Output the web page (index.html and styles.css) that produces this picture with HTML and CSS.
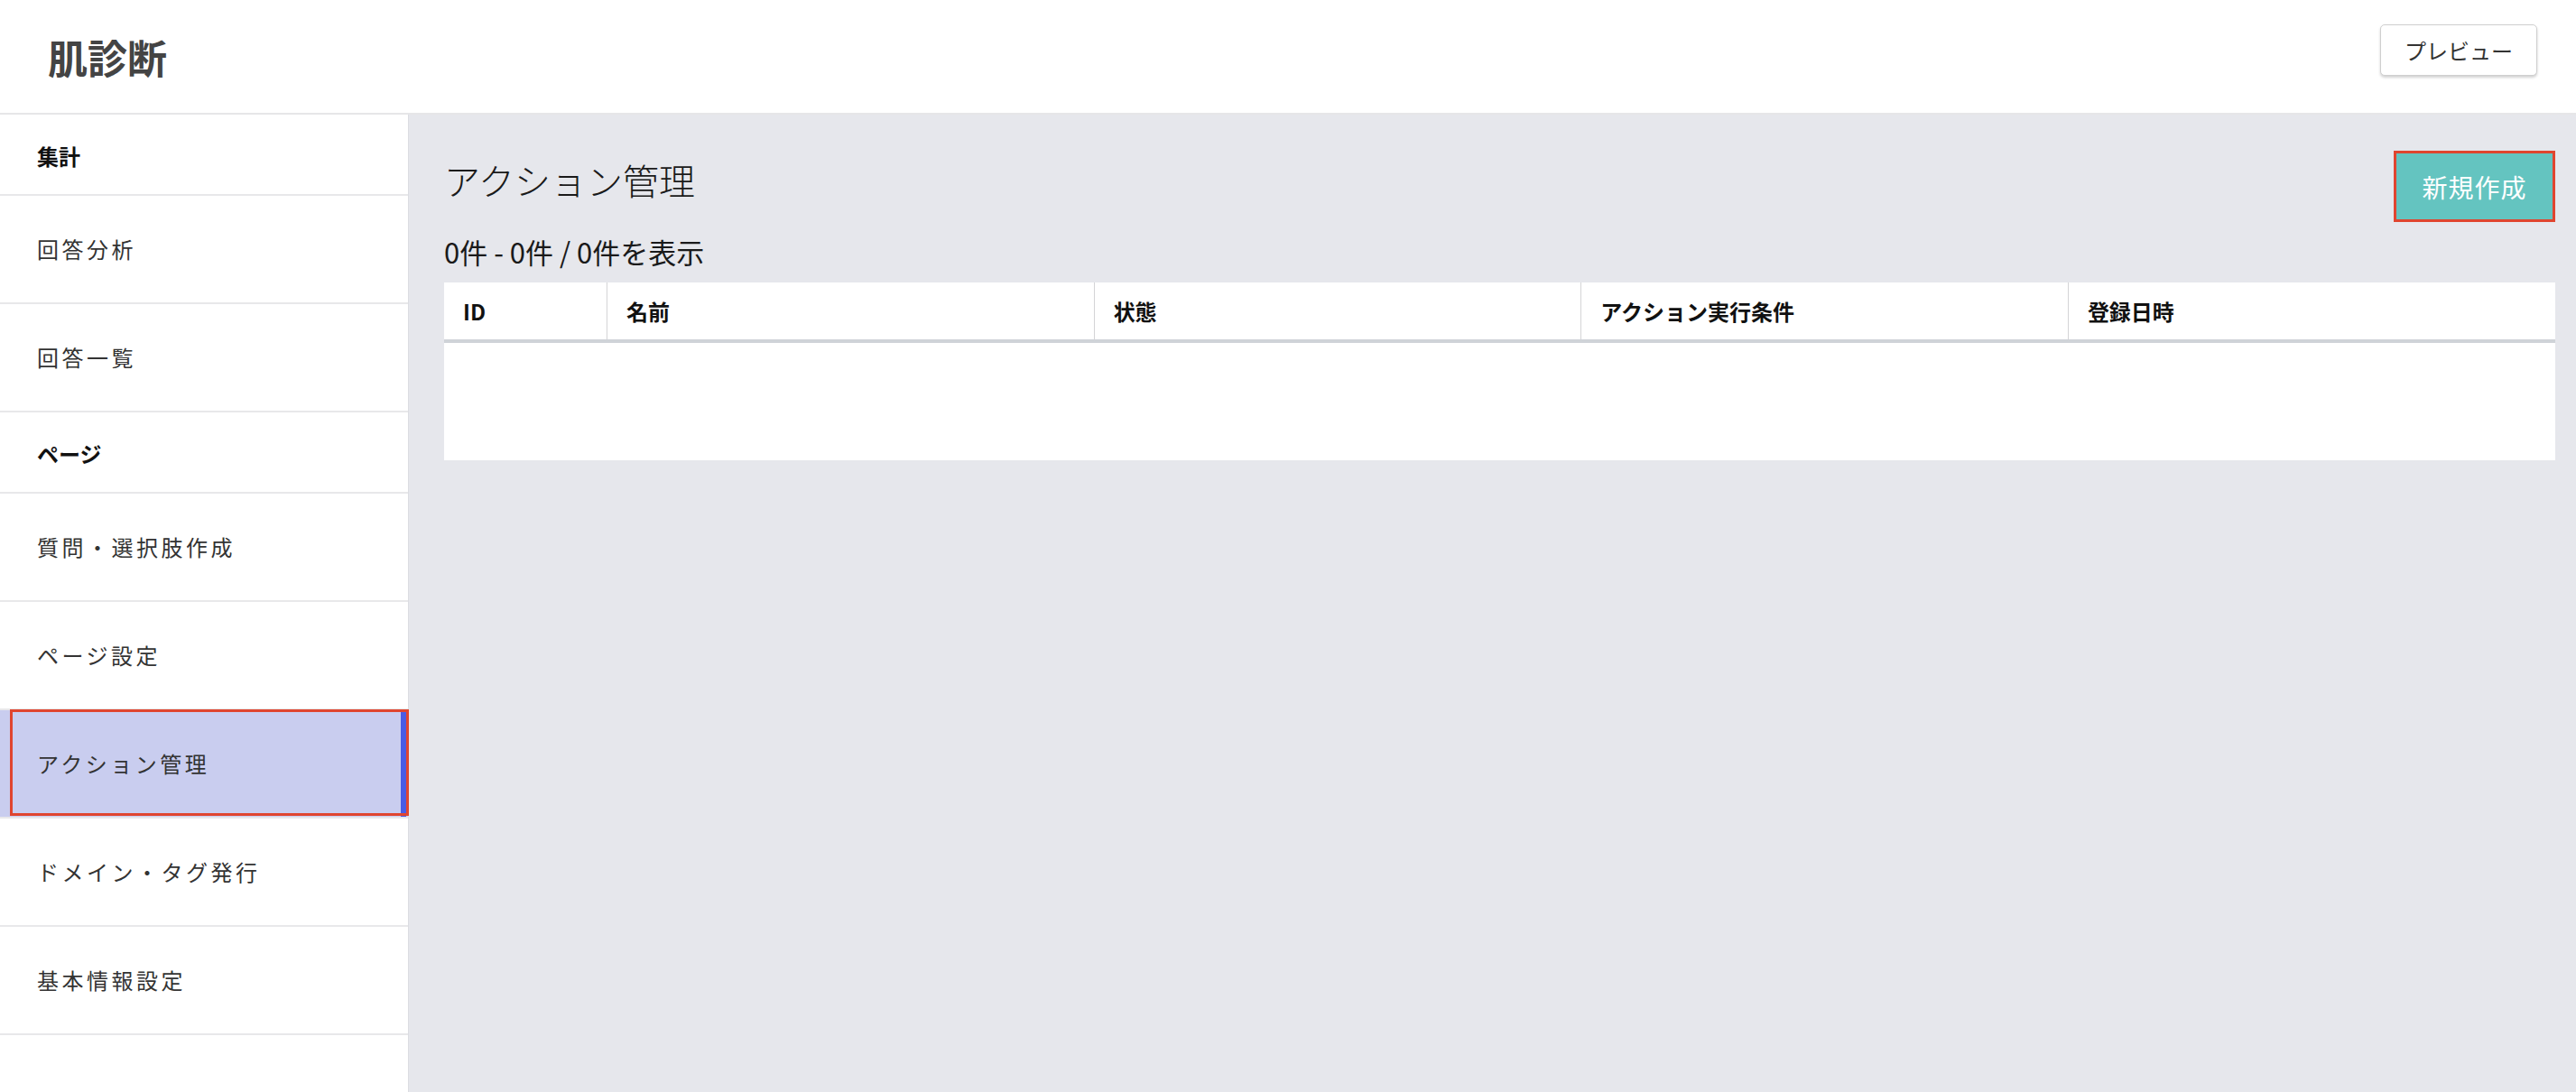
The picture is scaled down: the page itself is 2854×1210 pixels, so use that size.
FILE: index.html
```html
<!DOCTYPE html>
<html lang="ja">
<head>
    <meta charset="UTF-8">
    <title>肌診断 - アクション管理</title>
    <link rel="stylesheet" href="styles.css">
</head>
<body>
    <header class="header">
        <h1 class="logo">肌診断</h1>
        <button class="preview-btn">プレビュー</button>
    </header>

    <div class="layout">
        <nav class="sidebar">
            <div class="nav-group">集計</div>
            <a class="nav-item" href="#">回答分析</a>
            <a class="nav-item" href="#">回答一覧</a>
            <div class="nav-group">ページ</div>
            <a class="nav-item" href="#">質問・選択肢作成</a>
            <a class="nav-item" href="#">ページ設定</a>
            <a class="nav-item active" href="#">アクション管理</a>
            <a class="nav-item" href="#">ドメイン・タグ発行</a>
            <a class="nav-item" href="#">基本情報設定</a>
        </nav>

        <main class="main">
            <div class="toolbar">
                <h2 class="page-title">アクション管理</h2>
                <button class="new-btn">新規作成</button>
            </div>
            <p class="count">0件 - 0件 / 0件を表示</p>

            <table class="list">
                <thead>
                    <tr>
                        <th class="col-id">ID</th>
                        <th>名前</th>
                        <th>状態</th>
                        <th>アクション実行条件</th>
                        <th>登録日時</th>
                    </tr>
                </thead>
                <tbody>
                    <tr class="empty-row"><td colspan="5"></td></tr>
                </tbody>
            </table>
        </main>
    </div>
</body>
</html>
```

FILE: styles.css
```css
body {
    margin: 0;
    font-family: "Noto Sans CJK JP", "Noto Sans", sans-serif;
    color: #222;
    background-color: #fff;
}
button {
    font-family: inherit;
    cursor: pointer;
}

/* header */
.header {
    display: flex;
    justify-content: space-between;
    align-items: flex-start;
    height: 125px;
    padding: 0 43px 0 53px;
    border-bottom: 2px solid #e6e6e8;
}
.logo {
    margin: 33px 0 0;
    font-size: 44px;
    line-height: 60px;
    font-weight: bold;
    color: #444;
}
.preview-btn {
    margin-top: 27px;
    width: 174px;
    height: 57px;
    background-color: #fff;
    border: 1px solid #cfcfcf;
    border-radius: 5px;
    box-shadow: 0 2px 3px rgba(0, 0, 0, 0.18);
    font-size: 24px;
    color: #333;
}

/* layout */
.layout {
    display: flex;
    min-height: calc(100vh - 127px);
}
.sidebar {
    width: 452px;
    flex-shrink: 0;
    display: flex;
    flex-direction: column;
    border-right: 1px solid #dcdde2;
    background-color: #fff;
}
.nav-group {
    height: 88px;
    line-height: 92px;
    padding-left: 41px;
    font-size: 24px;
    font-weight: bold;
    color: #111;
    border-bottom: 2px solid #e8e8ea;
}
.nav-item {
    position: relative;
    height: 118px;
    line-height: 118px;
    padding-left: 41px;
    font-size: 24px;
    letter-spacing: 3.5px;
    color: #333;
    text-decoration: none;
    border-bottom: 2px solid #e8e8ea;
}
.nav-item.active {
    background-color: #c9cdef;
    box-shadow: inset -2px 0 0 #c9cdef, inset -8px 0 0 #4a5ce4;
}
/* red highlight box */
.nav-item.active::after {
    content: "";
    position: absolute;
    left: 11px;
    top: -1px;
    right: -1px;
    bottom: 1px;
    border: 3px solid #e0452f;
}

/* main */
.main {
    flex: 1;
    padding: 40px 23px 40px 39px;
    background-color: #e6e7ec;
}
.toolbar {
    display: flex;
    justify-content: space-between;
    align-items: flex-start;
}
.page-title {
    margin: 0;
    font-size: 40px;
    line-height: 64px;
    font-weight: 300;
    color: #1a1a1a;
}
.new-btn {
    width: 179px;
    height: 79px;
    background-color: #64c4c0;
    border: 3px solid #e0452f;
    font-size: 28px;
    letter-spacing: 1px;
    color: #fff;
}
.count {
    margin: 13px 0 14px;
    font-size: 31px;
    line-height: 40px;
    font-weight: normal;
    color: #1a1a1a;
}

/* table */
.list {
    width: 100%;
    border-collapse: collapse;
    background-color: #fff;
    table-layout: fixed;
}
.list th {
    height: 63px;
    padding: 0 21px;
    text-align: left;
    font-size: 24px;
    font-weight: bold;
    color: #111;
    border-right: 1px solid #d4d4d6;
    border-bottom: 4px solid #cfd3d8;
}
.list th:last-child {
    border-right: none;
}
.list .col-id {
    width: 138px;
}
.empty-row td {
    height: 130px;
    padding: 0;
}
```
